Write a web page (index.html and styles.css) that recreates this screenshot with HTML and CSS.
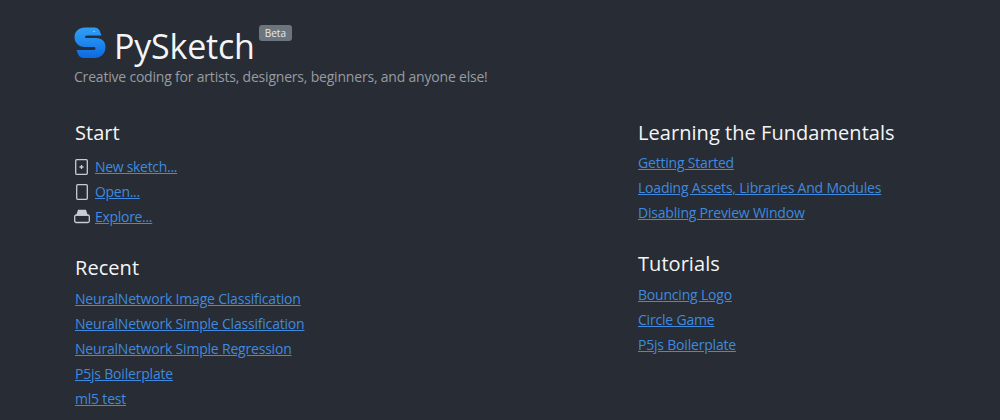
FILE: index.html
```html
<!DOCTYPE html>
<html lang="en">
<head>
    <meta charset="UTF-8">
    <title>PySketch</title>
    <link rel="stylesheet" href="styles.css">
</head>
<body>
    <div class="page">
        <!-- Logo, name and tagline -->
        <header class="header">
            <div class="brand">
                <svg class="logo" width="32" height="32" viewBox="0 0 32 32">
                    <defs>
                        <linearGradient id="logo-fill" x1="0" y1="0" x2="0" y2="1">
                            <stop offset="0" stop-color="#2e9ff4"/>
                            <stop offset="0.500" stop-color="#1f88ee"/>
                            <stop offset="1" stop-color="#0f68e0"/>
                        </linearGradient>
                    </defs>
                    <path fill="url(#logo-fill)" d="M11 0.500H20C23 0.500 25 2 26 4.500L27.500 8.500H13C11.500 8.500 11 9.500 11 10C11 10.800 11.500 11 13 11H22C28 11 31.500 14.500 31.500 20C31.500 26.500 27 31 20 31H10C7 31 5 29.500 4 27L2.500 23H19.500C21 23 21.500 22.300 21.500 21.500C21.500 20.700 21 20 19.500 20H10.500C4.500 20 0.500 15.500 0.500 10C0.500 4.500 5 0.500 11 0.500Z"/>
                    <circle cx="20" cy="4.500" r="0.800" fill="#9fd4fa"/>
                </svg>
                <h1 class="title">PySketch</h1>
                <span class="badge">Beta</span>
            </div>
            <p class="tagline">Creative coding for artists, designers, beginners, and anyone else!</p>
        </header>

        <div class="columns">
            <div class="column">
                <section class="section">
                    <h2 class="section-title">Start</h2>
                    <ul class="links icon-links">
                        <li class="icon-row">
                            <svg class="icon" width="16" height="16" viewBox="0 0 16 16" fill="none" stroke="#c9ccd1" stroke-width="1.300">
                                <rect x="1.700" y="0.700" width="11.600" height="14.600" rx="1"/>
                                <path d="M7.500 6V10M5.500 8H9.500"/>
                            </svg>
                            <a href="#">New sketch...</a>
                        </li>
                        <li class="icon-row">
                            <svg class="icon" width="16" height="16" viewBox="0 0 16 16" fill="none" stroke="#c9ccd1" stroke-width="1.300">
                                <rect x="2.700" y="0.700" width="10.600" height="14.600" rx="1"/>
                            </svg>
                            <a href="#">Open...</a>
                        </li>
                        <li class="icon-row">
                            <svg class="icon" width="16" height="16" viewBox="0 0 16 16" fill="none" stroke="#c9ccd1" stroke-width="1.300">
                                <path fill="#c9ccd1" d="M3 6L4.500 1.500H11.500L13 6Z"/>
                                <rect x="0.700" y="6" width="14.600" height="7.500" rx="1.500"/>
                            </svg>
                            <a href="#">Explore...</a>
                        </li>
                    </ul>
                </section>
                <section class="section">
                    <h2 class="section-title">Recent</h2>
                    <ul class="links">
                        <li><a href="#">NeuralNetwork Image Classification</a></li>
                        <li><a href="#">NeuralNetwork Simple Classification</a></li>
                        <li><a href="#">NeuralNetwork Simple Regression</a></li>
                        <li><a href="#">P5js Boilerplate</a></li>
                        <li><a href="#">ml5 test</a></li>
                    </ul>
                </section>
            </div>

            <div class="column">
                <section class="section">
                    <h2 class="section-title">Learning the Fundamentals</h2>
                    <ul class="links">
                        <li><a href="#">Getting Started</a></li>
                        <li><a href="#">Loading Assets, Libraries And Modules</a></li>
                        <li><a href="#">Disabling Preview Window</a></li>
                    </ul>
                </section>
                <section class="section">
                    <h2 class="section-title">Tutorials</h2>
                    <ul class="links">
                        <li><a href="#">Bouncing Logo</a></li>
                        <li><a href="#">Circle Game</a></li>
                        <li><a href="#">P5js Boilerplate</a></li>
                    </ul>
                </section>
            </div>
        </div>
    </div>
</body>
</html>
```

FILE: styles.css
```css
body {
    margin: 0;
    height: 420px;
    overflow: hidden;
    background-color: #282c34;
    color: #f4f5f6;
    font-family: "Open Sans", "Noto Sans", sans-serif;
}

.page {
    padding: 24px 0 0 75px;
}

/* Header */
.brand {
    display: flex;
    align-items: flex-start;
    height: 43px;
}

.logo {
    margin: 3px 0 0 -1px;
}

.title {
    margin: 0 0 0 8px;
    font-size: 34px;
    font-weight: 400;
    line-height: 44px;
    letter-spacing: -0.2px;
}

.badge {
    margin: 1px 0 0 4px;
    padding: 0 6px;
    height: 16px;
    border-radius: 3px;
    background-color: #6c757d;
    color: #e8e9ea;
    font-size: 10px;
    line-height: 16px;
}

.tagline {
    margin: 0 0 0 -1px;
    color: #969ca3;
    font-size: 14px;
    line-height: 19px;
    letter-spacing: -0.2px;
}

/* Two columns of link lists */
.columns {
    display: grid;
    grid-template-columns: 563px 1fr;
    margin-top: 32px;
}

.section {
    margin-bottom: 24px;
}

.section-title {
    margin: 0 0 2px;
    font-size: 20px;
    font-weight: 400;
    line-height: 30px;
    letter-spacing: 0.05px;
}

.section + .section .section-title {
    margin-bottom: 3px;
}

.links {
    margin: 0;
    padding: 0;
    list-style: none;
}

.icon-links {
    margin-top: 6px;
}

.links li {
    height: 25px;
    font-size: 14px;
    line-height: 25px;
    letter-spacing: -0.2px;
}

.links .icon-row {
    letter-spacing: -0.3px;
}

.links a {
    color: #3f8adf;
}

.icon-row {
    display: flex;
    align-items: center;
    gap: 5px;
}

.icon {
    margin-left: -1px;
}
```
